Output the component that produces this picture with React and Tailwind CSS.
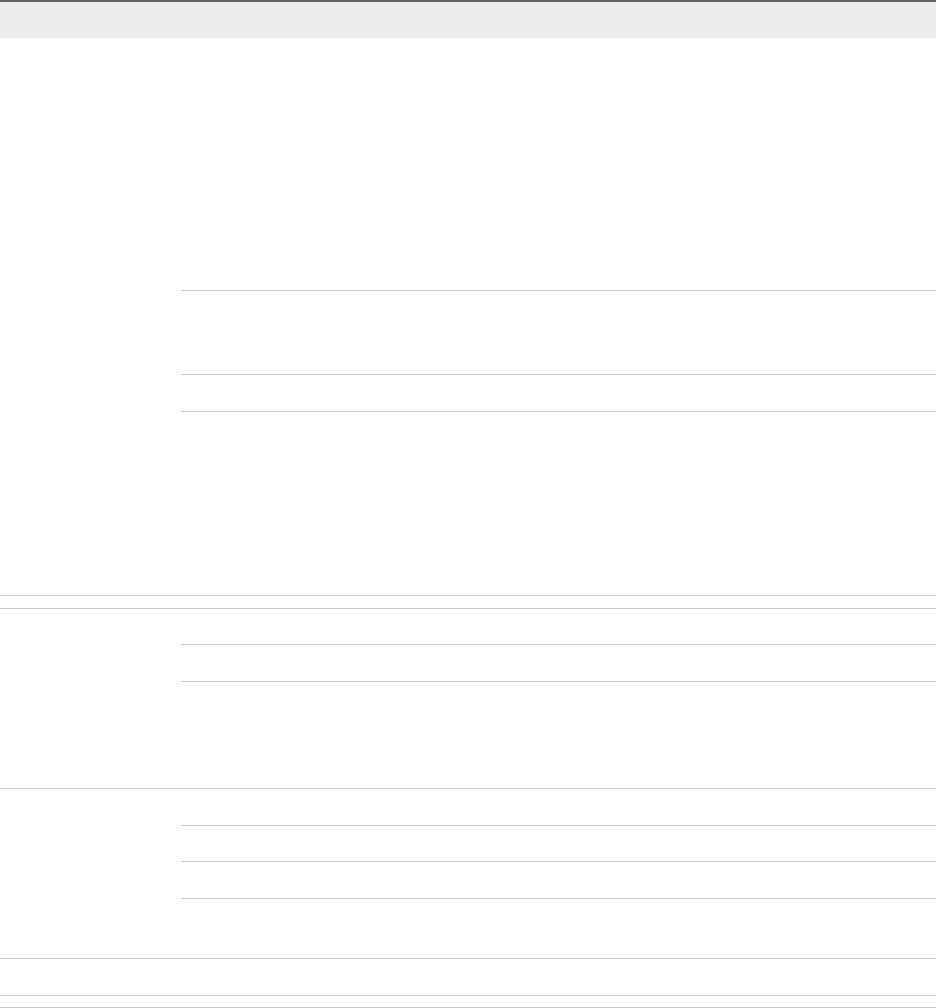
import React from 'react';

// empty table: groups of sub-rows, heights in px (content only, border added)
const groups = [
  { rows: [252, 83, 36, 183] },
  { rows: [12] },
  { rows: [35, 36, 106] },
  { rows: [36, 35, 36, 59] },
  { rows: [36] },
  { rows: [11] },
];

function Group({ rows, single }) {
  if (rows.length === 1) {
    return (
      <div className="border-b border-[#c8c8c8]" style={{ height: rows[0] + 1 }} />
    );
  }
  return (
    <div className="flex border-b border-[#c8c8c8]">
      <div className="w-[181px] shrink-0" />
      <div className="flex-1 flex flex-col">
        {rows.map((h, i) => (
          <div
            key={i}
            className={i < rows.length - 1 ? 'border-b border-[#c8c8c8]' : ''}
            style={{ height: i < rows.length - 1 ? h + 1 : h }}
          />
        ))}
      </div>
    </div>
  );
}

export default function App() {
  return (
    <div className="w-[936px] bg-white font-['Liberation_Sans',sans-serif]">
      <div className="h-[38px] border-t-2 border-[#646464] bg-[#ececec]" />
      {groups.map((g, i) => (
        <Group key={i} rows={g.rows} />
      ))}
    </div>
  );
}
